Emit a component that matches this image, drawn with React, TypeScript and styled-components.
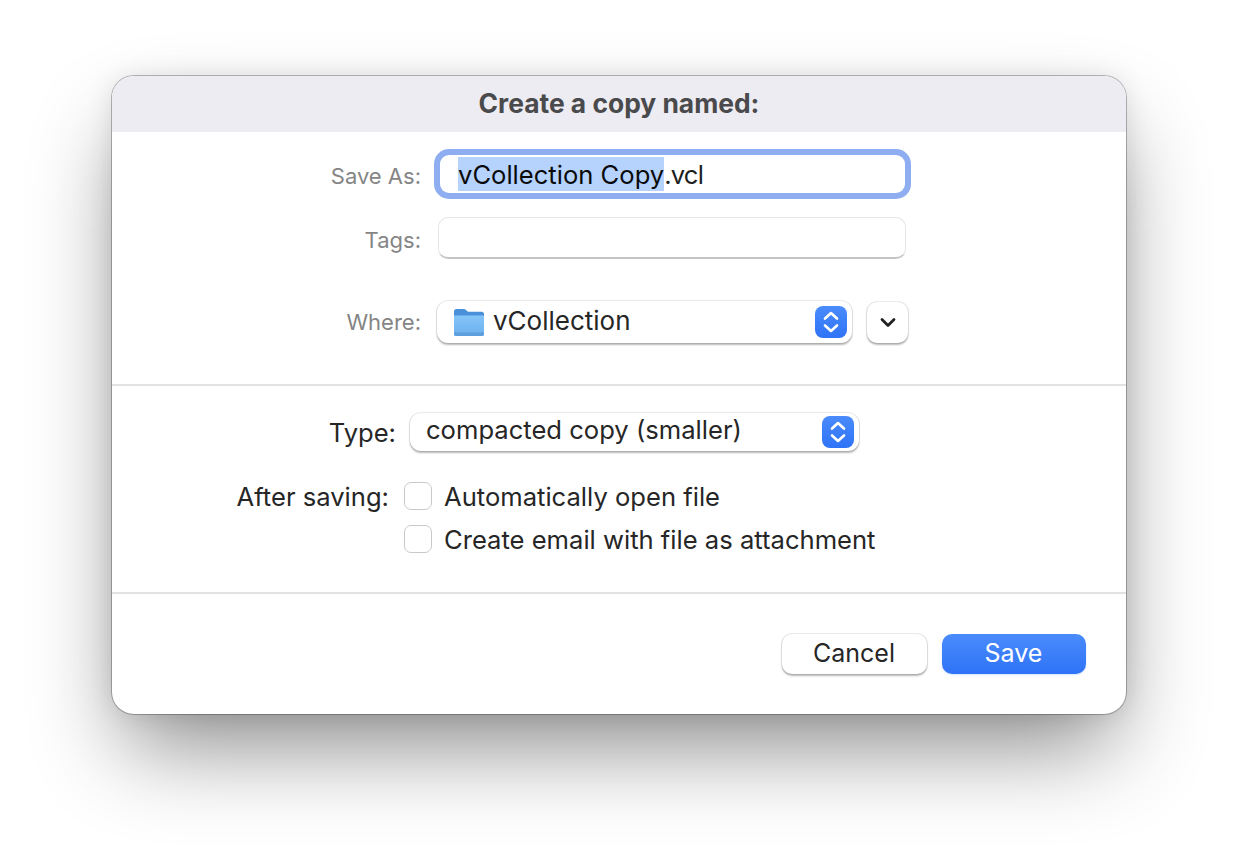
import React from 'react';
import styled, { createGlobalStyle } from 'styled-components';

const GlobalStyle = createGlobalStyle`
  html, body {
    margin: 0;
    padding: 0;
    background: #ffffff;
  }
  body {
    font-family: Inter, "Liberation Sans", sans-serif;
    color: #262626;
    -webkit-font-smoothing: antialiased;
  }
`;

const Page = styled.div`
  width: 1238px;
  height: 862px;
  box-sizing: border-box;
  padding: 76px 112px 0;
  overflow: hidden;
`;

const Dialog = styled.div`
  width: 1014px;
  height: 638px;
  box-sizing: border-box;
  display: flex;
  flex-direction: column;
  background: #ffffff;
  border-radius: 22px;
  overflow: hidden;
  box-shadow: 0 0 0 1px rgba(0, 0, 0, 0.26), 0 44px 90px -12px rgba(0, 0, 0, 0.46), 0 0 24px rgba(0, 0, 0, 0.1);
`;

const Header = styled.div`
  height: 56px;
  flex: none;
  box-sizing: border-box;
  padding-bottom: 3px;
  display: flex;
  align-items: center;
  justify-content: center;
  background: #edecf2;
  font-size: 26.4px;
  font-weight: 700;
  color: #4a4a4c;
`;

const Section = styled.div<{ $height: number }>`
  height: ${(p) => p.$height}px;
  flex: none;
  box-sizing: border-box;
  border-bottom: 2px solid #e2e2e2;
`;

const LocationForm = styled(Section)`
  display: grid;
  grid-template-columns: 309px 1fr;
  grid-template-rows: 52px 42px auto;
  column-gap: 17px;
  row-gap: 17px;
  padding-top: 16px;
  align-items: center;
  align-content: start;
  & > :nth-child(n + 5) {
    margin-top: 25px;
  }
`;

const DimLabel = styled.div`
  font-size: 22px;
  color: #858585;
  text-align: right;
  margin-top: 4px;
`;

const FocusField = styled.div`
  width: 465px;
  height: 38px;
  margin-left: 2px;
  box-sizing: border-box;
  display: flex;
  align-items: center;
  padding-left: 18px;
  background: #ffffff;
  border-radius: 9px;
  box-shadow: 0 0 0 6px #8fadf1;
  font-size: 25.6px;
  color: #1f1f1f;
  white-space: nowrap;
`;

const Selected = styled.span`
  display: inline-block;
  height: 34px;
  line-height: 36px;
  background: #b5d3fd;
  color: #0a0a0a;
`;

const Extension = styled.span`
  letter-spacing: -0.8px;
  line-height: 36px;
  height: 34px;
`;

const TagsField = styled.div`
  width: 468px;
  height: 42px;
  box-sizing: border-box;
  background: #ffffff;
  border: 1px solid #e6e6e6;
  border-bottom: 2px solid #c4c4c4;
  border-radius: 10px;
`;

const Line = styled.div`
  display: flex;
  align-items: center;
  gap: 15px;
  margin-left: -1px;
`;

const Popup = styled.div<{ $width: number; $height: number; $size: number; $inset: number }>`
  width: ${(p) => p.$width}px;
  height: ${(p) => p.$height}px;
  box-sizing: border-box;
  display: flex;
  align-items: center;
  gap: 9px;
  padding: 0 5px 0 ${(p) => p.$inset}px;
  background: #ffffff;
  border-radius: 11px;
  box-shadow: 0 0 0 1px rgba(0, 0, 0, 0.07), 0 1.5px 2px rgba(0, 0, 0, 0.28);
  font-size: ${(p) => p.$size}px;
  color: #262626;
  white-space: nowrap;
`;

const PopupText = styled.span<{ $lift: number }>`
  flex: 1;
  margin-bottom: ${(p) => p.$lift}px;
`;

const StepperBox = styled.div`
  width: 32px;
  height: 32px;
  flex: none;
  display: flex;
  align-items: center;
  justify-content: center;
  border-radius: 8px;
  background: linear-gradient(#4a8bfb, #2f73f7);
`;

const SquareButton = styled.div`
  width: 41px;
  height: 41px;
  display: flex;
  align-items: center;
  justify-content: center;
  background: #ffffff;
  border-radius: 10px;
  box-shadow: 0 0 0 1px rgba(0, 0, 0, 0.07), 0 1.5px 2px rgba(0, 0, 0, 0.28);
`;

const OptionsForm = styled(Section)`
  display: grid;
  grid-template-columns: 284px 1fr;
  column-gap: 14px;
  grid-template-rows: 38px auto 28px;
  row-gap: 15px;
  padding-top: 27px;
  align-items: center;
  align-content: start;
  & > :nth-child(3),
  & > :nth-child(4) {
    margin-top: 16px;
  }
`;

const LabelText = styled.span`
  display: block;
  transform: translateY(1px);
`;

const Label = styled.div<{ $shift?: number }>`
  font-size: 25.6px;
  line-height: 28px;
  color: #262626;
  text-align: right;
  white-space: nowrap;
  margin-right: ${(p) => p.$shift ?? 0}px;
`;

const CheckRow = styled.div`
  display: flex;
  align-items: center;
  gap: 12px;
  font-size: 25.6px;
  line-height: 28px;
  color: #262626;
  white-space: nowrap;
  margin-left: -6px;
`;

const Checkbox = styled.div`
  width: 28px;
  height: 28px;
  flex: none;
  box-sizing: border-box;
  background: #ffffff;
  border: 1px solid #c9c9c9;
  border-radius: 7px;
`;

const Footer = styled.div`
  flex: 1;
  display: flex;
  justify-content: flex-end;
  align-items: flex-start;
  gap: 15px;
  padding: 40px 40px 0 0;
`;

const Button = styled.div<{ $primary?: boolean }>`
  width: ${(p) => (p.$primary ? 144 : 145)}px;
  height: 40px;
  box-sizing: border-box;
  padding: 0 1px 2px 0;
  display: flex;
  align-items: center;
  justify-content: center;
  border-radius: 10px;
  font-size: 25px;
  color: ${(p) => (p.$primary ? '#ffffff' : '#262626')};
  background: ${(p) => (p.$primary ? 'linear-gradient(#4a8bfb, #2f73f7)' : '#ffffff')};
  box-shadow: ${(p) =>
    p.$primary
      ? '0 1px 2px rgba(47, 115, 247, 0.2)'
      : '0 0 0 1px rgba(0, 0, 0, 0.07), 0 1.5px 2px rgba(0, 0, 0, 0.28)'};
`;

const Stepper: React.FC = () => (
  <StepperBox>
    <svg width="20" height="24" viewBox="0 0 20 24" fill="none" stroke="#ffffff" strokeWidth="2.6" strokeLinecap="round" strokeLinejoin="round">
      <path d="M4 8.500 10 3l6 5.500" />
      <path d="M4 15.500 10 21l6-5.500" />
    </svg>
  </StepperBox>
);

const FolderIcon: React.FC = () => (
  <svg width="30" height="27" viewBox="0 0 30 27">
    <defs>
      <linearGradient id="folderFront" x1="0" y1="0" x2="0" y2="1">
        <stop offset="0" stopColor="#85c5f8" />
        <stop offset="1" stopColor="#69b0ee" />
      </linearGradient>
    </defs>
    <path d="M0 2.500A2.500 2.500 0 0 1 2.500 0h7.200c1 0 1.600.4 2.300 1l1.400 1.200c.5.4 1 .6 1.800.6H27.500A2.500 2.500 0 0 1 30 5.300V12H0Z" fill="#4a90d8" />
    <path d="M0 6.500h30v18.500a2 2 0 0 1-2 2H2a2 2 0 0 1-2-2Z" fill="url(#folderFront)" />
    <path d="M0 23.500h30v1.500a2 2 0 0 1-2 2H2a2 2 0 0 1-2-2Z" fill="#5c9fdc" />
  </svg>
);

const App: React.FC = () => (
  <Page>
    <GlobalStyle />
    <Dialog>
      <Header>Create a copy named:</Header>
      <LocationForm as="div" $height={254}>
        <DimLabel>Save As:</DimLabel>
        <FocusField>
          <Selected>vCollection Copy</Selected>
          <Extension>.vcl</Extension>
        </FocusField>
        <DimLabel>Tags:</DimLabel>
        <TagsField />
        <DimLabel>Where:</DimLabel>
        <Line>
          <Popup $width={415} $height={42} $size={26} $inset={17}>
            <FolderIcon />
            <PopupText $lift={3}>vCollection</PopupText>
            <Stepper />
          </Popup>
          <SquareButton>
            <svg width="16" height="11" viewBox="0 0 16 11" fill="none" stroke="#222222" strokeWidth="2.800" strokeLinecap="round" strokeLinejoin="round">
              <path d="M2 2.500 8 8.500l6-6" />
            </svg>
          </SquareButton>
        </Line>
      </LocationForm>
      <OptionsForm as="div" $height={208}>
        <Label><LabelText>Type:</LabelText></Label>
        <Popup $width={449} $height={38} $size={25.6} $inset={16}>
          <PopupText $lift={6}>compacted copy (smaller)</PopupText>
          <Stepper />
        </Popup>
        <Label $shift={7}><LabelText>After saving:</LabelText></Label>
        <CheckRow>
          <Checkbox />
          <LabelText>Automatically open file</LabelText>
        </CheckRow>
        <div />
        <CheckRow>
          <Checkbox />
          <LabelText>Create email with file as attachment</LabelText>
        </CheckRow>
      </OptionsForm>
      <Footer>
        <Button>Cancel</Button>
        <Button $primary>Save</Button>
      </Footer>
    </Dialog>
  </Page>
);

export default App;
